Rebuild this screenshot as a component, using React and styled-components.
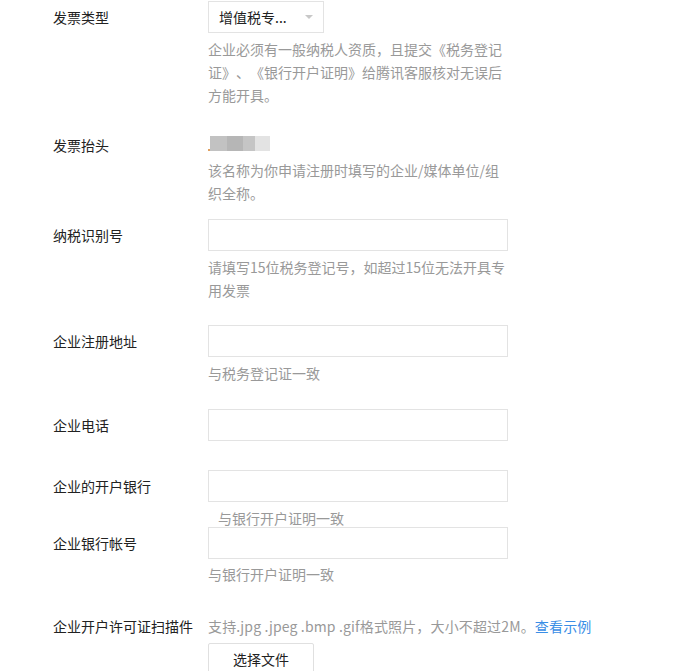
import React from "react";
import styled, { createGlobalStyle } from "styled-components";

const GlobalStyle = createGlobalStyle`
  body {
    margin: 0;
    background: #fff;
    font-family: "Noto Sans CJK SC", "Noto Sans", sans-serif;
    font-size: 14px;
    color: #222;
    text-spacing-trim: space-all;
  }
`;

const Form = styled.div`
  padding: 1px 0 0 53px;
  width: 638px;
  height: 670px;
  overflow: hidden;
`;

const Row = styled.div`
  display: grid;
  grid-template-columns: 155px 300px;
  margin-top: ${(p) => p.$mt || 0}px;
  margin-bottom: ${(p) => p.$mb || 0}px;
`;

const Label = styled.div`
  line-height: ${(p) => p.$lh || 32}px;
  white-space: nowrap;
  color: #222;
`;

const Field = styled.div`
  display: flex;
  flex-direction: column;
`;

const Select = styled.div`
  box-sizing: border-box;
  width: 116px;
  height: 32px;
  border: 1px solid #e3e3e3;
  padding: 0 10px;
  display: flex;
  align-items: center;
  justify-content: space-between;
  line-height: 30px;
`;

const Caret = styled.span`
  width: 0;
  height: 0;
  border-left: 4px solid transparent;
  border-right: 4px solid transparent;
  border-top: 4px solid #c8c8c8;
`;

const Input = styled.input`
  box-sizing: border-box;
  width: 300px;
  height: 32px;
  border: 1px solid #e3e3e3;
  outline: none;
  padding: 0 8px;
  font: inherit;
`;

const Hint = styled.div`
  margin-top: ${(p) => (p.$mt === undefined ? 5 : p.$mt)}px;
  padding-left: ${(p) => p.$indent || 0}px;
  line-height: ${(p) => p.$lh || 23}px;
  color: #999;
  white-space: ${(p) => (p.$nowrap ? "nowrap" : "normal")};
  letter-spacing: ${(p) => (p.$nowrap ? "0.15px" : "0")};
`;

const Link = styled.a`
  color: #3a8ee6;
  text-decoration: none;
`;

const NameBox = styled.div`
  position: relative;
  height: 28px;
  display: flex;
  align-items: center;
  padding-left: 2px;
`;

const Blur = styled.span`
  display: inline-block;
  width: ${(p) => p.$w}px;
  height: 15px;
  background: ${(p) => p.$c};
  filter: blur(0.6px);
`;

const Dot = styled.span`
  position: absolute;
  left: 0;
  top: 20px;
  width: 2px;
  height: 2px;
  background: #e0a060;
`;

const FileButton = styled.button`
  box-sizing: border-box;
  margin-top: 5px;
  width: 106px;
  height: 32px;
  border: 1px solid #e0e0e0;
  border-radius: 2px;
  background: #fff;
  font: inherit;
  color: #222;
`;

export default function App() {
  return (
    <>
      <GlobalStyle />
      <Form>
        <Row>
          <Label>发票类型</Label>
          <Field>
            <Select>
              增值税专...
              <Caret />
            </Select>
            <Hint>
              企业必须有一般纳税人资质，且提交《税务登记证》、《银行开户证明》给腾讯客服核对无误后方能开具。
            </Hint>
          </Field>
        </Row>

        <Row $mt={22}>
          <Label>发票抬头</Label>
          <Field>
            <NameBox>
              <Dot />
              <Blur $w={17} $c="#c2c2c2" />
              <Blur $w={16} $c="#b6b6b6" />
              <Blur $w={12} $c="#c5c5c5" />
              <Blur $w={15} $c="#e3e3e3" />
            </NameBox>
            <Hint $mt={2}>该名称为你申请注册时填写的企业/媒体单位/组织全称。</Hint>
          </Field>
        </Row>

        <Row $mt={14}>
          <Label>纳税识别号</Label>
          <Field>
            <Input />
            <Hint>请填写15位税务登记号，如超过15位无法开具专用发票</Hint>
          </Field>
        </Row>

        <Row $mt={23}>
          <Label>企业注册地址</Label>
          <Field>
            <Input />
            <Hint>与税务登记证一致</Hint>
          </Field>
        </Row>

        <Row $mt={24}>
          <Label>企业电话</Label>
          <Field>
            <Input />
          </Field>
        </Row>

        <Row $mt={29} $mb={-3}>
          <Label>企业的开户银行</Label>
          <Field>
            <Input />
            <Hint $indent={10}>与银行开户证明一致</Hint>
          </Field>
        </Row>

        <Row>
          <Label>企业银行帐号</Label>
          <Field>
            <Input />
            <Hint $mt={4}>与银行开户证明一致</Hint>
          </Field>
        </Row>

        <Row $mt={28}>
          <Label $lh={24}>企业开户许可证扫描件</Label>
          <Field>
            <Hint $mt={0} $lh={24} $nowrap>
              支持.jpg .jpeg .bmp .gif格式照片，大小不超过2M。<Link href="#">查看示例</Link>
            </Hint>
            <FileButton>选择文件</FileButton>
          </Field>
        </Row>
      </Form>
    </>
  );
}
